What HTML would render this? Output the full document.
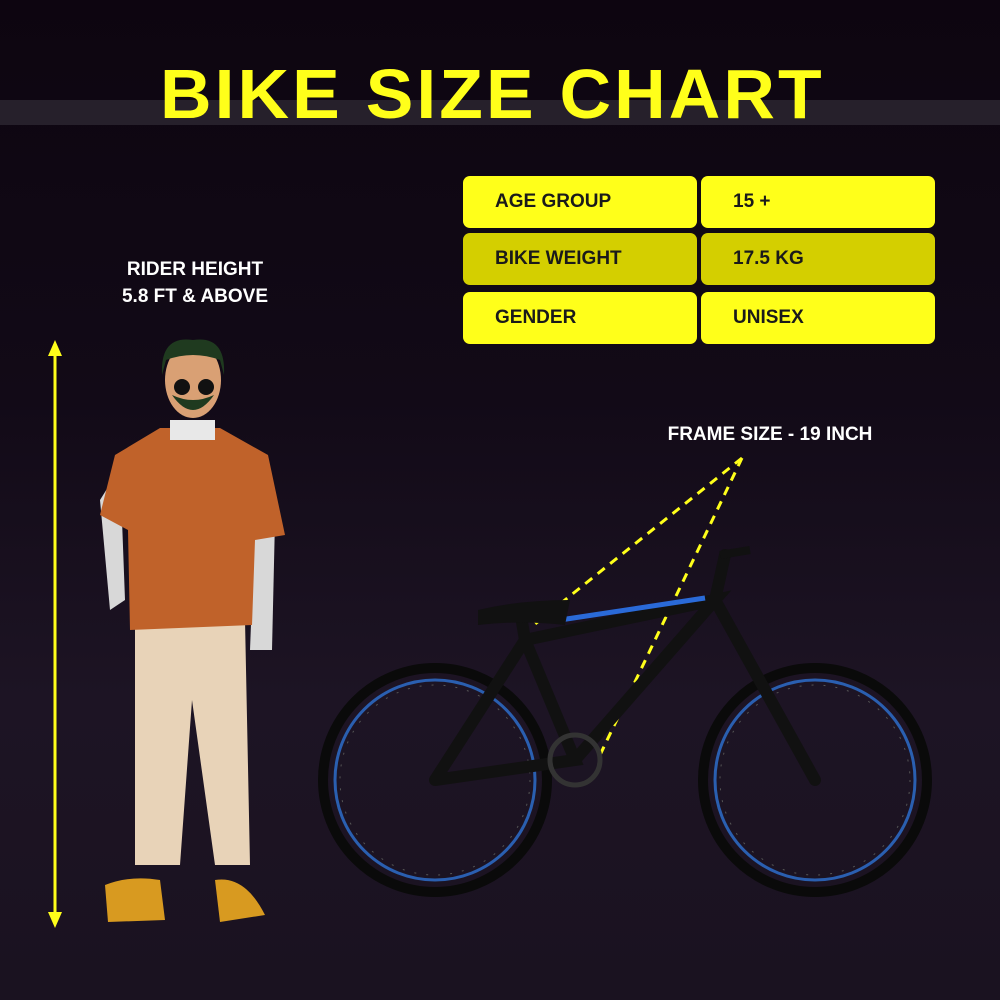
<!DOCTYPE html>
<html><head><style>
body{margin:0;width:1000px;height:1000px;overflow:hidden;font-family:"Liberation Sans",sans-serif;background:linear-gradient(#0d0510 0%,#120a17 40%,#1d1424 70%,#1a1220 100%);position:relative}
.band{position:absolute;left:0;top:100px;width:1000px;height:25px;background:#26202b}
.title{position:absolute;left:160px;top:54px;white-space:nowrap;font-size:70px;font-weight:bold;color:#ffff1a;letter-spacing:3px;line-height:80px;transform-origin:left;transform:scaleX(1.02)}
.cell{position:absolute;width:234px;height:52px;border-radius:7px;background:#ffff1a;font-weight:bold;font-size:19px;color:#1a1a1a;line-height:52px;box-sizing:border-box;padding-left:32px}
.dk{background:#d4cf00}
.lbl{position:absolute;color:#fff;font-weight:bold;font-size:19px;text-align:center}
</style></head><body>
<div class="band"></div>
<div class="title">BIKE SIZE CHART</div>
<div class="cell" style="left:463px;top:176px">AGE GROUP</div>
<div class="cell" style="left:701px;top:176px">15 +</div>
<div class="cell dk" style="left:463px;top:233px">BIKE WEIGHT</div>
<div class="cell dk" style="left:701px;top:233px">17.5 KG</div>
<div class="cell" style="left:463px;top:292px">GENDER</div>
<div class="cell" style="left:701px;top:292px">UNISEX</div>
<div class="lbl" style="left:90px;top:256px;width:210px;line-height:27px">RIDER HEIGHT<br>5.8 FT &amp; ABOVE</div>
<div class="lbl" style="left:640px;top:424px;width:260px">FRAME SIZE - 19 INCH</div>
<svg width="1000" height="1000" style="position:absolute;left:0;top:0">
<line x1="55" y1="350" x2="55" y2="918" stroke="#ffff1a" stroke-width="3"/>
<polygon points="55,340 48,356 62,356" fill="#ffff1a"/>
<polygon points="55,928 48,912 62,912" fill="#ffff1a"/>
<path d="M135 620 L245 620 L250 865 L215 865 L192 700 L180 865 L135 865 Z" fill="#e8d3b8"/>
<path d="M125 460 L100 500 L110 610 L125 600 L122 520 Z" fill="#d8d8d8"/>
<path d="M255 520 L250 650 L272 650 L275 520 Z" fill="#d8d8d8"/>
<path d="M160 428 L220 428 L268 455 L285 535 L255 540 L252 625 L130 630 L128 530 L100 515 L115 455 Z" fill="#c0622a"/>
<path d="M170 420 L215 420 L215 440 L170 440 Z" fill="#e8e8e8"/>
<ellipse cx="193" cy="380" rx="28" ry="38" fill="#d9a074"/>
<path d="M162 375 Q160 335 193 340 Q226 335 224 375 L220 360 Q193 350 166 360 Z" fill="#1f3a1f"/>
<path d="M172 395 Q193 425 214 395 Q193 405 172 395 Z" fill="#1f3a1f"/>
<circle cx="182" cy="387" r="8" fill="#111"/><circle cx="206" cy="387" r="8" fill="#111"/>
<path d="M105 885 Q130 875 160 880 L165 920 L108 922 Z" fill="#d89a20"/>
<path d="M215 880 Q245 875 265 915 L220 922 Z" fill="#d89a20"/>
<line x1="742" y1="458" x2="530" y2="628" stroke="#ffff1a" stroke-width="3" stroke-dasharray="9 7"/>
<line x1="742" y1="458" x2="600" y2="755" stroke="#ffff1a" stroke-width="3" stroke-dasharray="9 7"/>
<g fill="none">
<circle cx="435" cy="780" r="112" stroke="#0a0a0a" stroke-width="10"/>
<circle cx="435" cy="780" r="100" stroke="#2a5fb0" stroke-width="3"/>
<circle cx="815" cy="780" r="112" stroke="#0a0a0a" stroke-width="10"/>
<circle cx="815" cy="780" r="100" stroke="#2a5fb0" stroke-width="3"/>
<circle cx="435" cy="780" r="95" stroke="#555" stroke-width="1" stroke-dasharray="2 10"/>
<circle cx="815" cy="780" r="95" stroke="#555" stroke-width="1" stroke-dasharray="2 10"/>
<path d="M435 780 L575 760 L525 640 L435 780 M525 640 L715 600 L575 760 M715 600 L815 780 M525 640 L520 610 M715 600 L725 555" stroke="#111" stroke-width="12" stroke-linecap="round"/>
<path d="M560 620 L705 598" stroke="#2a6ad8" stroke-width="5"/>
<circle cx="575" cy="760" r="25" stroke="#333" stroke-width="5"/>
<path d="M720 555 L750 550" stroke="#111" stroke-width="8"/>
</g>
<path d="M478 610 Q520 600 570 600 L565 625 Q520 620 478 625 Z" fill="#111"/>
</svg>
</body></html>
